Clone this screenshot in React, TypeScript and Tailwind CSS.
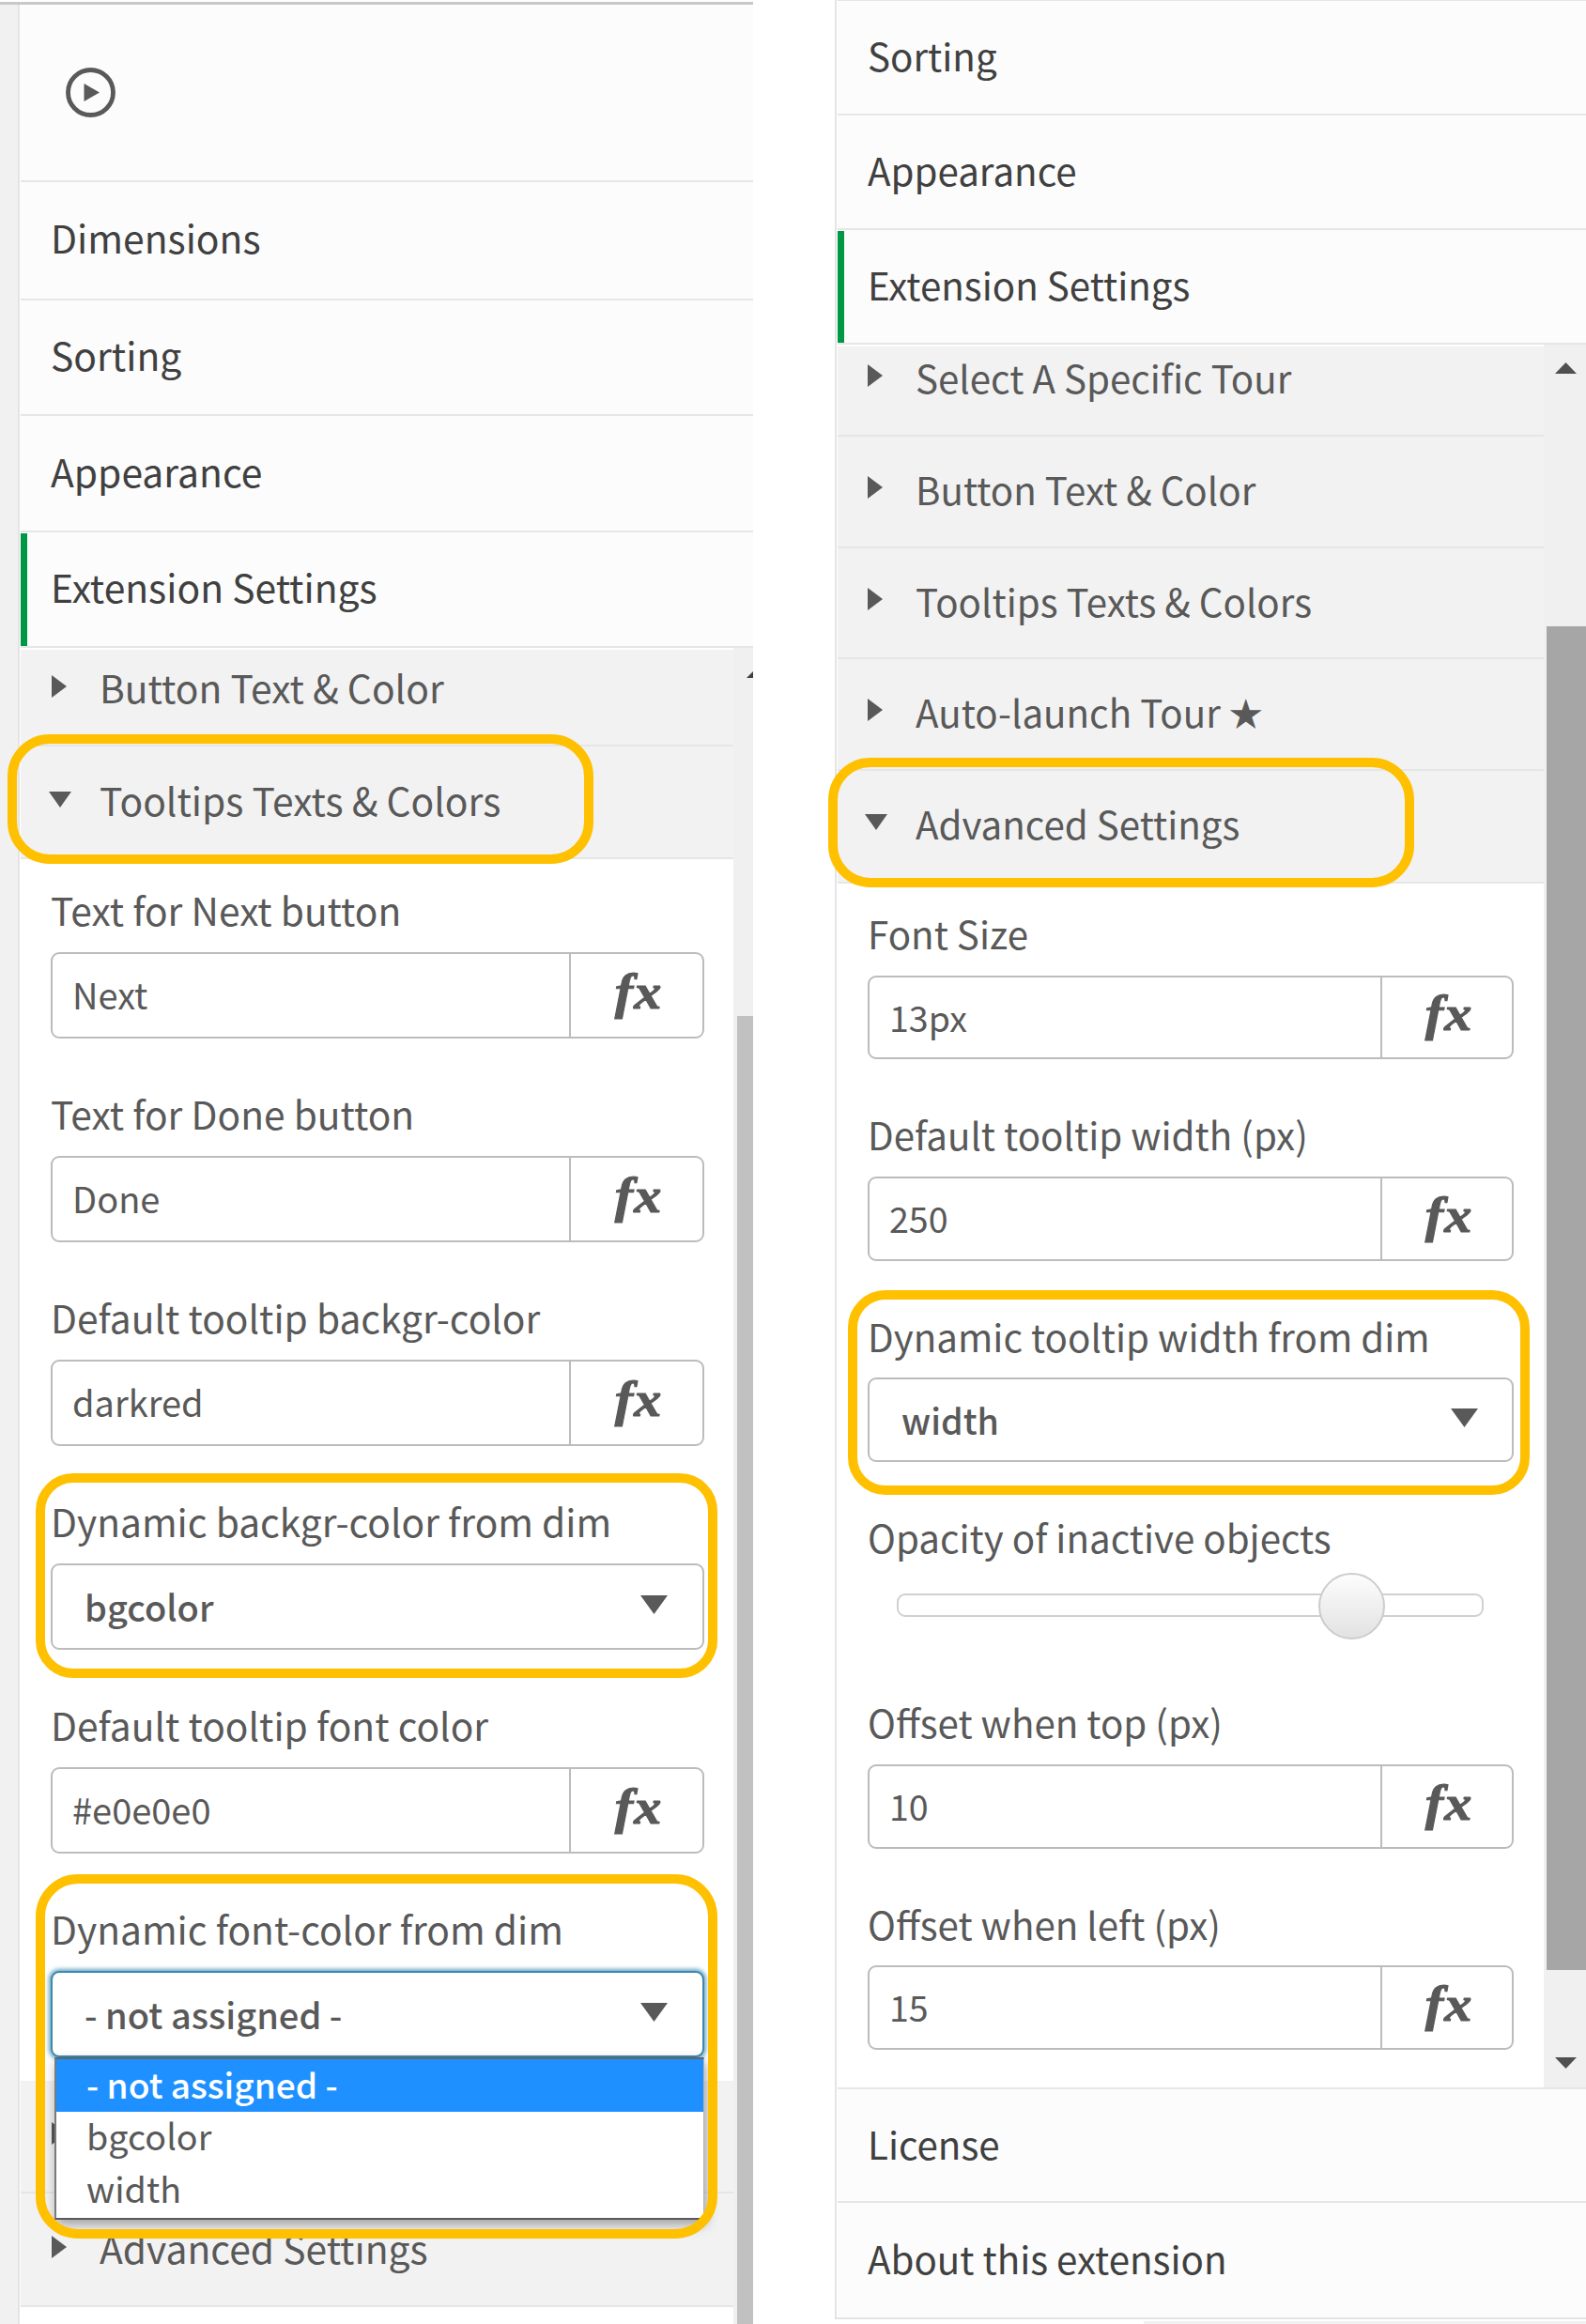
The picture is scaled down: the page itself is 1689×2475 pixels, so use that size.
import React from "react";

const HIGHLIGHT = "pointer-events-none absolute border-[10px] border-[#ffc000]";

function Tri({ dir, className }: { dir: "right" | "down" | "up"; className: string }) {
  const d = dir === "right" ? "M0 0L10 5L0 10Z" : dir === "down" ? "M0 0H10L5 10Z" : "M0 10H10L5 0Z";
  return (
    <svg viewBox="0 0 10 10" preserveAspectRatio="none" className={"block shrink-0 " + className}>
      <path d={d} />
    </svg>
  );
}

function Section({ label, className, active }: { label: string; className: string; active?: boolean }) {
  return (
    <div className={"relative flex items-start whitespace-nowrap border-b-2 border-[#e6e6e6] bg-[#fcfcfc] leading-none text-[#404040] " + className}>
      {active && <div className="absolute top-px bottom-0 left-0 w-[7px] bg-[#009845]" />}
      <span>{label}</span>
    </div>
  );
}

function SubSection({ label, className, open, star }: { label: string; className: string; open?: boolean; star?: boolean }) {
  return (
    <div className={"flex items-end whitespace-nowrap border-b-2 border-[#e6e6e6] bg-[#f2f2f2] leading-none text-[#595959] " + className}>
      <div className="flex w-[51px] shrink-0">
        {open ? (
          <Tri dir="down" className="-ml-[3px] mb-[13px] h-[17px] w-[24px] fill-[#595959]" />
        ) : (
          <Tri dir="right" className="mb-[10px] h-[24px] w-[16px] fill-[#595959]" />
        )}
      </div>
      <span>{label}</span>
      {star && <span className="mb-[2px] ml-[9px] text-[36px]">★</span>}
    </div>
  );
}

function Expression({ value, className, fxClass }: { value: string; className: string; fxClass: string }) {
  return (
    <div className={"flex rounded-[9px] border-2 border-[#bcbcbc] bg-white leading-none text-[#595959] " + className}>
      <div className="flex flex-1 items-center pb-[2px] pl-[21px]">{value}</div>
      <div
        className={
          "flex items-center justify-center border-l-2 border-[#bcbcbc] pb-[8px] pl-[4px] font-['Liberation_Serif',serif] text-[53px] font-bold italic " +
          fxClass
        }
      >
        <span className="inline-block scale-x-110 tracking-[1px] [-webkit-text-stroke:1.1px_#595959]">fx</span>
      </div>
    </div>
  );
}

function Select({ value, className }: { value: string; className: string }) {
  return (
    <div className={"flex items-center justify-between rounded-[9px] border-2 bg-white pl-[34px] leading-none font-medium text-[#595959] " + className}>
      <span className="pb-px whitespace-pre">{value}</span>
      <Tri dir="down" className="mb-[4px] h-[20px] w-[29px] fill-[#595959]" />
    </div>
  );
}

function LeftField({ label, children }: { label: string; children: React.ReactNode }) {
  return (
    <div className="h-[217px] pr-[32px] pl-[32px]">
      <div className="mb-[24px] h-[41px] whitespace-nowrap text-[40.7px] leading-none text-[#595959]">{label}</div>
      {children}
    </div>
  );
}

function RightField({ label, className, children }: { label: string; className: string; children: React.ReactNode }) {
  return (
    <div className={"pr-[31px] pl-[32px] " + className}>
      <div className="h-[38px] whitespace-nowrap leading-none text-[#595959]">{label}</div>
      {children}
    </div>
  );
}

function LeftPanel() {
  const box = "h-[92px] w-[696px] text-[38px]";
  return (
    <div className="relative h-[2475px] w-[802px] overflow-hidden bg-[#f1f1f1] text-[40.8px]">
      <div className="h-[2px] bg-white" />
      <div className="h-[3px] bg-[#c8c8c8]" />
      <div className="ml-[19px] flex h-[2470px] flex-col border-l-2 border-[#e4e4e4] bg-white pl-px">
        <div className="flex h-[189px] shrink-0 items-start border-b-2 border-[#e6e6e6] bg-[#fcfcfc] pt-[67px] pl-[48px]">
          <svg viewBox="0 0 53 53" className="h-[53px] w-[53px]">
            <circle cx="26.5" cy="26.5" r="24" fill="none" stroke="#595959" strokeWidth="4.8" />
            <path d="M19.5 17L36 26.5L19.5 36Z" fill="#595959" />
          </svg>
        </div>
        <Section label="Dimensions" className="h-[126px] shrink-0 pt-[39px] pl-[32px]" />
        <Section label="Sorting" className="h-[123px] shrink-0 pt-[38px] pl-[32px]" />
        <Section label="Appearance" className="h-[124px] shrink-0 pt-[39px] pl-[32px]" />
        <Section label="Extension Settings" active className="h-[123px] shrink-0 pt-[38px] pl-[32px]" />
        <div className="flex flex-1">
          <div className="w-[759px] border-t-2 border-white">
            <SubSection label="Button Text & Color" className="h-[103px] pb-[40px] pl-[33px]" />
            <SubSection label="Tooltips Texts & Colors" open className="h-[120px] pb-[40px] pl-[33px]" />
            <div className="h-[1301px] pt-[34px]">
              <LeftField label="Text for Next button">
                <Expression value="Next" className={box} fxClass="w-[142px]" />
              </LeftField>
              <LeftField label="Text for Done button">
                <Expression value="Done" className={box} fxClass="w-[142px]" />
              </LeftField>
              <LeftField label="Default tooltip backgr-color">
                <Expression value="darkred" className={box} fxClass="w-[142px]" />
              </LeftField>
              <LeftField label="Dynamic backgr-color from dim">
                <Select value="bgcolor" className={"border-[#bcbcbc] pr-[37px] " + box} />
              </LeftField>
              <LeftField label="Default tooltip font color">
                <Expression value="#e0e0e0" className={box} fxClass="w-[142px]" />
              </LeftField>
              <LeftField label="Dynamic font-color from dim">
                <Select value="- not assigned -" className={"border-[#4088ad] pr-[37px] shadow-[0_0_4px_2px_#6aa9c8] " + box} />
              </LeftField>
            </div>
            <SubSection label="" className="h-[120px] pb-[40px] pl-[33px]" />
            <SubSection label="Advanced Settings" className="h-[121px] pb-[40px] pl-[33px]" />
          </div>
          <div className="flex w-[21px] flex-col items-end bg-[#f0f0f0]">
            <div className="h-[392px] w-[7px] overflow-hidden pt-[25px]">
              <Tri dir="up" className="h-[7px] w-[14px] fill-[#404040]" />
            </div>
            <div className="w-[17px] flex-1 bg-[#c1c1c1]" />
          </div>
        </div>
      </div>

      <div className="absolute top-[2191px] left-[58px] w-[692px] border-2 border-r border-t-[#5b6670] border-r-[#b5b5b5] border-b-[#595959] border-l-[#7a7a7a] bg-white text-[37.7px] leading-none text-[#595959] shadow-[2px_5px_12px_rgba(0,0,0,0.35)]">
        <div className="h-[56px] bg-[#1e90ff] pt-[8px] pl-[32px] text-[37.1px] font-medium text-white">- not assigned -</div>
        <div className="h-[56px] pt-[6px] pl-[32px]">bgcolor</div>
        <div className="h-[57px] pt-[6px] pl-[32px]">width</div>
      </div>

      <div className={HIGHLIGHT + " top-[782px] left-[8px] h-[138px] w-[624px] rounded-[45px]"} />
      <div className={HIGHLIGHT + " top-[1569px] left-[38px] h-[218px] w-[726px] rounded-[40px]"} />
      <div className={HIGHLIGHT + " top-[1996px] left-[38px] h-[388px] w-[726px] rounded-[45px]"} />
    </div>
  );
}

function RightPanel() {
  const box = "w-[688px] text-[37.6px]";
  return (
    <div className="relative flex h-[2475px] w-[807px] flex-col overflow-hidden text-[40.3px]">
      <div className="ml-[7px] h-[2470px] shrink-0 border-b-2 border-l-2 border-[#e4e4e4] bg-white pl-px">
        <div className="h-px bg-[#e4e4e4]" />
        <Section label="Sorting" className="h-[122px] pt-[38px] pl-[32px]" />
        <Section label="Appearance" className="h-[122px] pt-[38px] pl-[32px]" />
        <Section label="Extension Settings" active className="h-[122px] pt-[38px] pl-[32px]" />
        <div className="flex h-[1856px]">
          <div className="w-[752px] border-t-2 border-white">
            <SubSection label="Select A Specific Tour" className="h-[96px] pb-[41px] pl-[32px]" />
            <SubSection label="Button Text & Color" className="h-[119px] pb-[41px] pl-[32px]" />
            <SubSection label="Tooltips Texts & Colors" className="h-[118px] pb-[40px] pl-[32px]" />
            <SubSection label="Auto-launch Tour" star className="h-[119px] pb-[41px] pl-[32px]" />
            <SubSection label="Advanced Settings" open className="h-[120px] pb-[42px] pl-[32px]" />
            <div className="pt-[33px]">
              <RightField label="Font Size" className="h-[214px]">
                <Expression value="13px" className={"mt-[27px] h-[89px] " + box} fxClass="w-[140px]" />
              </RightField>
              <RightField label="Default tooltip width (px)" className="h-[215px]">
                <Expression value="250" className={"mt-[27px] h-[90px] " + box} fxClass="w-[140px]" />
              </RightField>
              <RightField label="Dynamic tooltip width from dim" className="h-[214px]">
                <Select value="width" className={"mt-[26px] h-[90px] border-[#bcbcbc] pr-[36px] " + box} />
              </RightField>
              <RightField label="Opacity of inactive objects" className="h-[197px]">
                <div className="relative mt-[42px] ml-[31px] h-[25px] w-[625px] rounded-[9px] border-2 border-[#d0d0d0]">
                  <div className="absolute -top-[24px] left-[447px] h-[71px] w-[71px] rounded-full border-2 border-[#cccccc] bg-linear-to-b from-[#fdfdfd] to-[#e2e2e2]" />
                </div>
              </RightField>
              <RightField label="Offset when top (px)" className="h-[215px]">
                <Expression value="10" className={"mt-[27px] h-[90px] " + box} fxClass="w-[140px]" />
              </RightField>
              <RightField label="Offset when left (px)" className="h-[158px]">
                <Expression value="15" className={"mt-[26px] h-[90px] " + box} fxClass="w-[140px]" />
              </RightField>
            </div>
          </div>
          <div className="flex flex-1 flex-col bg-[#f0f0f0] pl-[3px]">
            <div className="h-[300px] pt-[19px] pl-[9px]">
              <Tri dir="up" className="h-[12px] w-[23px] fill-[#505050]" />
            </div>
            <div className="h-[1431px] bg-[#a6a6a6]" />
            <div className="pt-[93px] pl-[9px]">
              <Tri dir="down" className="h-[12px] w-[23px] fill-[#505050]" />
            </div>
          </div>
        </div>
        <div className="h-[2px] bg-[#e6e6e6]" />
        <Section label="License" className="h-[121px] pt-[38px] pl-[32px]" />
        <div className="flex h-[122px] items-start whitespace-nowrap bg-[#fcfcfc] pt-[39px] pl-[32px] leading-none text-[#404040]">
          About this extension
        </div>
      </div>
      <div className="mt-[2px] ml-[336px] h-[3px] bg-[#f1f1f1]" />

      <div className={HIGHLIGHT + " top-[807px] left-0 h-[138px] w-[624px] rounded-[45px]"} />
      <div className={HIGHLIGHT + " top-[1374px] left-[21px] h-[218px] w-[726px] rounded-[40px]"} />
    </div>
  );
}

export default function App() {
  return (
    <div className="flex h-[2475px] w-[1689px] justify-between overflow-hidden bg-white font-['Noto_Sans_CJK_SC',sans-serif]">
      <LeftPanel />
      <RightPanel />
    </div>
  );
}
